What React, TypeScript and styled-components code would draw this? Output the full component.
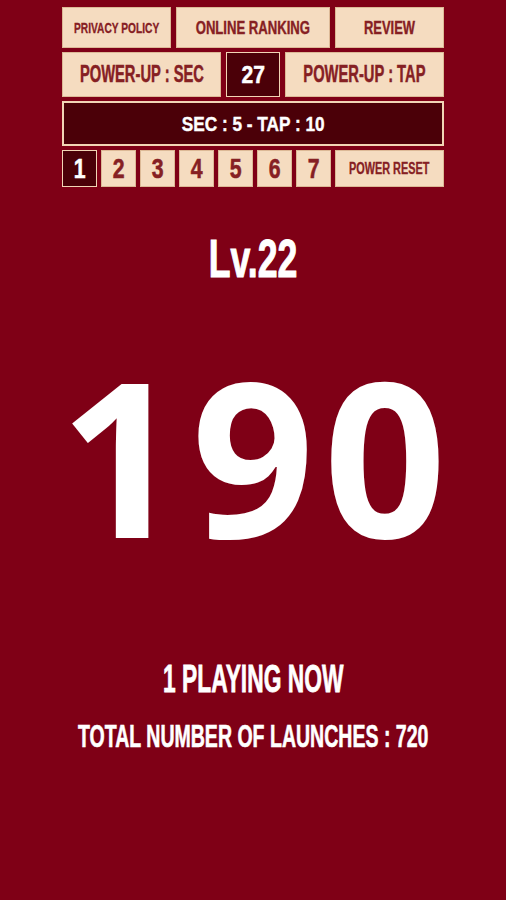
import React from "react";
import styled, { createGlobalStyle } from "styled-components";

const Global = createGlobalStyle`
  html, body {
    margin: 0;
    padding: 0;
    background: #7f0016;
  }
  body {
    font-family: "Liberation Sans", Arial, sans-serif;
  }
`;

const Page = styled.main`
  width: 506px;
  height: 900px;
  background: #7f0016;
  display: flex;
  flex-direction: column;
  align-items: center;
  overflow: hidden;
`;

const Panel = styled.section`
  width: 382px;
  margin-top: 7px;
  display: flex;
  flex-direction: column;
  gap: 4px;
`;

const Row = styled.div<{ $cols: string; $h: number; $gap?: number }>`
  display: grid;
  grid-template-columns: ${(p) => p.$cols};
  gap: ${(p) => p.$gap ?? 5}px;
  height: ${(p) => p.$h}px;
`;

// condensed look: Oswald-like headline type squeezed horizontally
const Squeeze = styled.span<{ $x: number }>`
  display: inline-block;
  white-space: nowrap;
  transform: scaleX(${(p) => p.$x});
  transform-origin: center;
  -webkit-text-stroke: 0.02em currentColor;
`;

const Tile = styled.div<{ $size?: number; $active?: boolean }>`
  min-width: 0;
  box-sizing: border-box;
  border: 1px solid ${(p) => (p.$active ? "#f2d5b5" : "#dcb996")};
  background: ${(p) => (p.$active ? "#4b0008" : "#f5dcc0")};
  color: ${(p) => (p.$active ? "#ffffff" : "#862023")};
  font-weight: 700;
  font-size: ${(p) => p.$size ?? 19}px;
  display: flex;
  align-items: center;
  justify-content: center;
  cursor: pointer;
  user-select: none;
`;

const Banner = styled.div`
  height: 45px;
  box-sizing: border-box;
  border: 2px solid #f2d5b5;
  background: #4b0008;
  color: #ffffff;
  font-weight: 700;
  font-size: 21px;
  display: flex;
  align-items: center;
  justify-content: center;
`;

const Level = styled.h2`
  margin: 44px 0 0;
  color: #ffffff;
  font-weight: 700;
  font-size: 54px;
  line-height: 54px;
`;

const Score = styled.div`
  margin-top: 62px;
  padding-left: 9px;
  color: #ffffff;
  font-family: "Open Sans", sans-serif;
  font-weight: 700;
  font-size: 215px;
  line-height: 215px;
  letter-spacing: 9px;
`;

const Playing = styled.p`
  margin: 98px 0 0;
  color: #ffffff;
  font-weight: 700;
  font-size: 38px;
  line-height: 38px;
`;

const Launches = styled.p`
  margin: 23px 0 0;
  color: #ffffff;
  font-weight: 700;
  font-size: 31px;
  line-height: 31px;
`;

const levels = [1, 2, 3, 4, 5, 6, 7];

export default function App() {
  return (
    <Page>
      <Global />
      <Panel>
        <Row $cols="109px 154px minmax(0, 1fr)" $h={41}>
          <Tile $size={15}>
            <Squeeze $x={0.68}>PRIVACY POLICY</Squeeze>
          </Tile>
          <Tile>
            <Squeeze $x={0.69}>ONLINE RANKING</Squeeze>
          </Tile>
          <Tile>
            <Squeeze $x={0.68}>REVIEW</Squeeze>
          </Tile>
        </Row>
        <Row $cols="minmax(0, 1fr) 54px minmax(0, 1fr)" $h={45}>
          <Tile $size={23}>
            <Squeeze $x={0.64}>POWER-UP : SEC</Squeeze>
          </Tile>
          <Tile $active $size={24}>
            <Squeeze $x={0.88}>27</Squeeze>
          </Tile>
          <Tile $size={23}>
            <Squeeze $x={0.64}>POWER-UP : TAP</Squeeze>
          </Tile>
        </Row>
        <Banner>
          <Squeeze $x={0.82}>SEC : 5 - TAP : 10</Squeeze>
        </Banner>
        <Row $cols="repeat(7, 35px) minmax(0, 1fr)" $h={37} $gap={4}>
          {levels.map((n) => (
            <Tile key={n} $active={n === 1} $size={28}>
              <Squeeze $x={0.76}>{n}</Squeeze>
            </Tile>
          ))}
          <Tile $size={16}>
            <Squeeze $x={0.68}>POWER RESET</Squeeze>
          </Tile>
        </Row>
      </Panel>
      <Level>
        <Squeeze $x={0.66}>Lv.22</Squeeze>
      </Level>
      <Score>190</Score>
      <Playing>
        <Squeeze $x={0.6}>1 PLAYING NOW</Squeeze>
      </Playing>
      <Launches>
        <Squeeze $x={0.63}>TOTAL NUMBER OF LAUNCHES : 720</Squeeze>
      </Launches>
    </Page>
  );
}
